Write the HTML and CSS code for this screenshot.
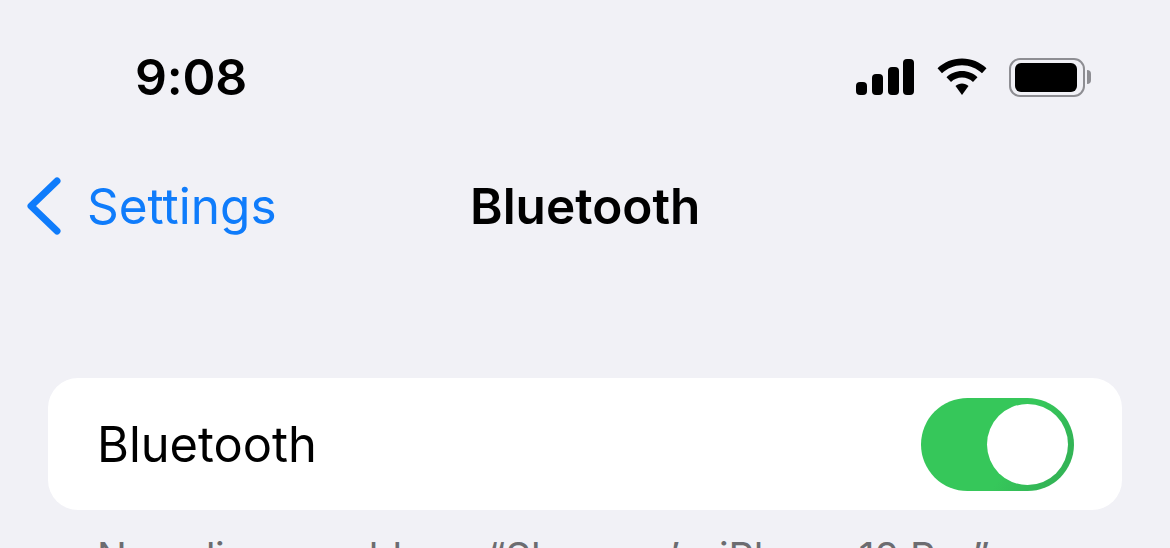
FILE: index.html
```html
<!DOCTYPE html>
<html lang="en">
<head>
  <meta charset="UTF-8">
  <meta name="viewport" content="width=device-width, initial-scale=1.0">
  <title>Bluetooth</title>
  <link rel="stylesheet" href="styles.css">
</head>
<body>
  <div class="screen">
    <div class="status-bar">
      <span class="time">9:08</span>
      <div class="status-icons">
        <svg class="signal" width="58" height="38" viewBox="0 0 58 38">
          <rect x="0" y="24" width="11" height="13" rx="4" />
          <rect x="16" y="16" width="11" height="21" rx="4" />
          <rect x="32" y="9" width="11" height="28" rx="4" />
          <rect x="47" y="1" width="11" height="36" rx="4" />
        </svg>
        <svg class="wifi" width="50" height="38" viewBox="0 0 50 38">
          <path d="M25 0.5C15.5 0.5 7 4.2 0.5 10.2L5 15.2C10.3 10.2 17.3 7.2 25 7.2C32.7 7.2 39.7 10.2 45 15.2L49.5 10.2C43 4.2 34.5 0.5 25 0.5Z" />
          <path d="M25 13C19 13 13.6 15.3 9.5 19.2L14 24C16.9 21.3 20.8 19.6 25 19.6C29.2 19.6 33.1 21.3 36 24L40.5 19.2C36.4 15.3 31 13 25 13Z" />
          <path d="M25 25.5C22.5 25.5 20.2 26.5 18.5 28.1L25 37L31.5 28.1C29.8 26.5 27.5 25.5 25 25.5Z" />
        </svg>
        <div class="battery">
          <div class="battery-body"><div class="battery-level"></div></div>
          <div class="battery-cap"></div>
        </div>
      </div>
    </div>

    <div class="nav-bar">
      <a class="back">
        <svg class="chevron" width="34" height="58" viewBox="0 0 34 58">
          <path d="M30 4L4 29L30 54" />
        </svg>
        <span>Settings</span>
      </a>
      <h1 class="title">Bluetooth</h1>
    </div>

    <div class="group">
      <span class="row-label">Bluetooth</span>
      <div class="switch"><div class="knob"></div></div>
    </div>
    <p class="note"><span class="note-lead">Now discoverable as</span> <span class="note-owner">“Shannon’s</span> iPhone 12 Pro”.</p>
  </div>
</body>
</html>
```

FILE: styles.css
```css
html, body {
  margin: 0;
  padding: 0;
  height: 100%;
  overflow: hidden;
}
body {
  font-family: Inter, "Liberation Sans", sans-serif;
  background-color: #f1f1f6;
  color: #000;
}
.screen {
  width: 1170px;
  height: 548px;
  overflow: hidden;
}
.status-bar {
  display: flex;
  justify-content: space-between;
  align-items: center;
  height: 46px;
  padding: 54px 79px 0 135px;
}
.time {
  font-size: 50px;
  font-weight: 600;
  letter-spacing: -0.2px;
}
.status-icons {
  display: flex;
  align-items: center;
  gap: 22px;
}
.signal, .wifi {
  fill: #000;
}
.signal {
  margin-right: 1px;
}
.battery {
  display: flex;
  align-items: center;
  gap: 2px;
}
.battery-body {
  box-sizing: border-box;
  width: 76px;
  height: 39px;
  padding: 3px 6px 3px 3.5px;
  border: 2.5px solid #8e8e93;
  border-radius: 11px;
}
.battery-level {
  height: 100%;
  background-color: #000;
  border-radius: 6px;
}
.battery-cap {
  width: 4px;
  height: 14px;
  background-color: #8e8e93;
  border-radius: 0 4px 4px 0;
}
.nav-bar {
  display: flex;
  align-items: center;
  height: 70px;
  margin-top: 71px;
  padding-left: 27px;
}
.back {
  display: flex;
  align-items: center;
  gap: 26px;
  width: 443px;
  color: #0f7cfb;
  font-size: 49.5px;
}
.chevron {
  fill: none;
  stroke: #0f7cfb;
  stroke-width: 7;
  stroke-linecap: round;
  stroke-linejoin: round;
}
.title {
  margin: 0;
  font-size: 49.5px;
  font-weight: 600;
}
.group {
  display: flex;
  justify-content: space-between;
  align-items: center;
  height: 132px;
  margin: 137px 48px 0;
  padding: 0 48px 0 49px;
  background-color: #fff;
  border-radius: 30px;
}
.row-label {
  font-size: 48.8px;
}
.switch {
  box-sizing: border-box;
  display: flex;
  justify-content: flex-end;
  width: 153px;
  height: 93px;
  padding: 6px;
  background: linear-gradient(120deg, #36c75a 60%, #33b556 85%);
  border-radius: 47px;
}
.knob {
  width: 81px;
  height: 81px;
  background-color: #fff;
  border-radius: 50%;
}
.note {
  margin: 23px 0 0 97px;
  font-size: 39.6px;
  white-space: nowrap;
  color: #6c6c70;
}
.note-lead {
  letter-spacing: -0.5px;
}
.note-owner {
  margin-right: 10px;
}
```
